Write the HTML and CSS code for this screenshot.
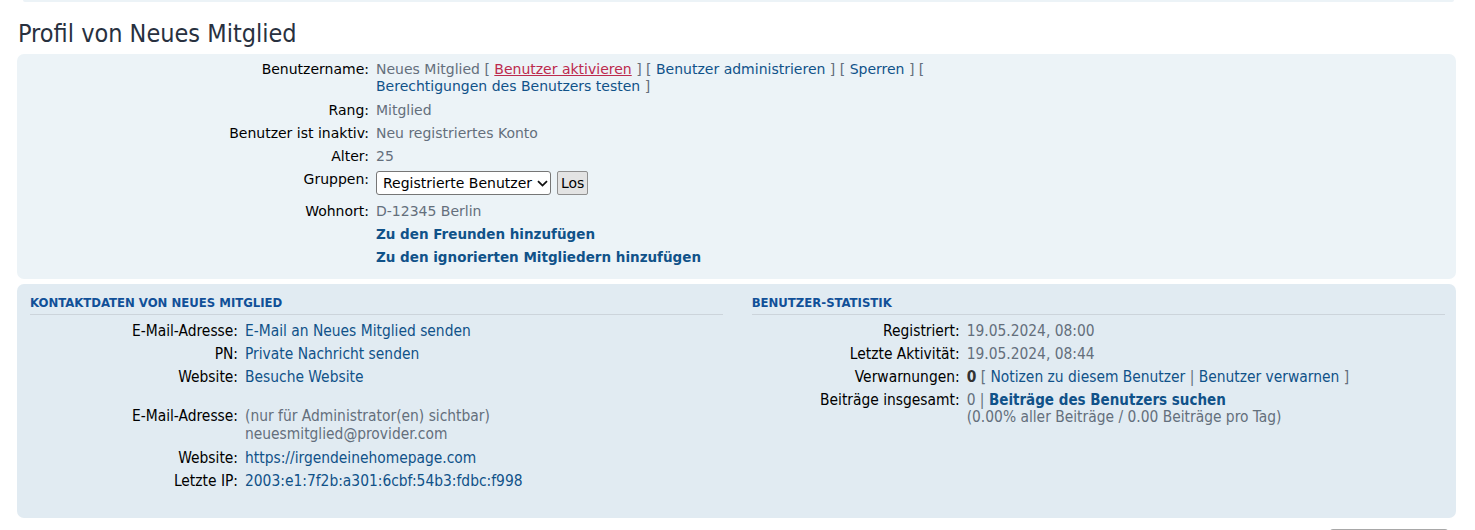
FILE: index.html
```html
<!DOCTYPE html>
<html lang="de">
<head>
<meta charset="utf-8">
<title>Profil von Neues Mitglied</title>
<link rel="stylesheet" href="styles.css">
</head>
<body>
<div class="page">
  <div class="prev-panel"></div>
  <h2 class="title">Profil von Neues Mitglied</h2>

  <div class="panel panel-top">
    <dl class="details top-details">
      <dt>Benutzername:</dt>
      <dd class="wide">Neues Mitglied [ <a href="#" class="red">Benutzer aktivieren</a> ] [ <a href="#">Benutzer administrieren</a> ] [ <a href="#">Sperren</a> ] [ <a href="#">Berechtigungen des Benutzers testen</a> ]</dd>
      <dt>Rang:</dt>
      <dd>Mitglied</dd>
      <dt>Benutzer ist inaktiv:</dt>
      <dd>Neu registriertes Konto</dd>
      <dt>Alter:</dt>
      <dd>25</dd>
      <dt>Gruppen:</dt>
      <dd class="groups">
        <span class="select-wrap">
          <select class="group-select"><option>Registrierte Benutzer</option></select>
          <svg class="chev" width="11" height="7" viewBox="0 0 11 7" aria-hidden="true"><path d="M1 1.2 L5.5 5.6 L10 1.2" fill="none" stroke="#111" stroke-width="1.8"/></svg>
        </span>
        <button class="btn" type="button">Los</button>
      </dd>
      <dt>Wohnort:</dt>
      <dd>D-12345 Berlin</dd>
      <dt></dt>
      <dd><a href="#" class="strong top-strong">Zu den Freunden hinzufügen</a></dd>
      <dt></dt>
      <dd><a href="#" class="strong top-strong">Zu den ignorierten Mitgliedern hinzufügen</a></dd>
    </dl>
  </div>

  <div class="panel panel-bottom">
    <div class="columns">
      <div class="column">
        <h3 class="col-head">Kontaktdaten von Neues Mitglied</h3>
        <dl class="details cond">
          <dt>E-Mail-Adresse:</dt>
          <dd><a href="#">E-Mail an Neues Mitglied senden</a></dd>
          <dt>PN:</dt>
          <dd><a href="#">Private Nachricht senden</a></dd>
          <dt>Website:</dt>
          <dd><a href="#">Besuche Website</a></dd>
        </dl>
        <dl class="details cond admin">
          <dt>E-Mail-Adresse:</dt>
          <dd>(nur für Administrator(en) sichtbar)<br>neuesmitglied@provider.com</dd>
          <dt>Website:</dt>
          <dd><a href="#">https://irgendeinehomepage.com</a></dd>
          <dt>Letzte IP:</dt>
          <dd><a href="#">2003:e1:7f2b:a301:6cbf:54b3:fdbc:f998</a></dd>
        </dl>
      </div>
      <div class="column">
        <h3 class="col-head">Benutzer-Statistik</h3>
        <dl class="details cond">
          <dt>Registriert:</dt>
          <dd>19.05.2024, 08:00</dd>
          <dt>Letzte Aktivität:</dt>
          <dd>19.05.2024, 08:44</dd>
          <dt>Verwarnungen:</dt>
          <dd><b class="num">0</b> [ <a href="#">Notizen zu diesem Benutzer</a> | <a href="#">Benutzer verwarnen</a> ]</dd>
          <dt>Beiträge insgesamt:</dt>
          <dd>0 | <a href="#" class="strong bottom-strong">Beiträge des Benutzers suchen</a><br>(0.00% aller Beiträge / 0.00 Beiträge pro Tag)</dd>
        </dl>
      </div>
    </div>
  </div>

  <div class="jump-edge"></div>
</div>
</body>
</html>
```

FILE: styles.css
```css
html, body {
  margin: 0;
  padding: 0;
  background: #ffffff;
}

body {
  font-family: "DejaVu Sans", Verdana, sans-serif;
  font-size: 14px;
  color: #333333;
  overflow: hidden;
}

.page {
  width: 1439px;
  padding-left: 17px;
}

.prev-panel {
  height: 2px;
  margin: 0 2px 0 6px;
  background: #ecf3f7;
  border-radius: 0 0 6px 6px;
}

.title {
  margin: 17px 0 5px 1px;
  font-family: "DejaVu Sans Condensed", "DejaVu Sans", sans-serif;
  font-weight: normal;
  font-size: 25px;
  line-height: 30px;
  color: #28313f;
}

.panel {
  border-radius: 7px;
}

.panel-top {
  background: #ecf3f7;
  padding: 7px 11px 13px 13px;
}

.panel-bottom {
  background: #e1ebf2;
  margin-top: 5px;
  padding: 12px 11px 28px 13px;
}

a {
  color: #105289;
  text-decoration: none;
}

a.red {
  color: #bc2a4d;
  text-decoration: underline;
}

a.strong {
  font-weight: bold;
}

a.top-strong {
  font-size: 13.5px;
}

a.bottom-strong {
  font-size: 15px;
}

.details {
  display: grid;
  margin: 0;
  row-gap: 6px;
  line-height: 17px;
}

.details dt {
  text-align: right;
  color: #000000;
}

.details dd {
  margin: 0;
  padding-left: 7px;
  color: #646f7c;
}

.top-details {
  width: 1132px;
  grid-template-columns: 339px 600px;
}

.top-details .wide {
  margin-bottom: 1px;
}

.groups {
  display: flex;
  align-items: center;
  gap: 6px;
  margin-bottom: 2px !important;
}

.select-wrap {
  position: relative;
  display: inline-flex;
}

.group-select {
  appearance: none;
  -webkit-appearance: none;
  height: 24px;
  width: 175px;
  font-family: "DejaVu Sans", Verdana, sans-serif;
  font-size: 14px;
  color: #000;
  background: #ffffff;
  border: 1px solid #767676;
  border-radius: 3px;
  padding: 0 14px 0 6px;
}

.chev {
  position: absolute;
  right: 3px;
  top: 9px;
  pointer-events: none;
}

.btn {
  height: 24px;
  font-family: "DejaVu Sans", Verdana, sans-serif;
  font-size: 14px;
  color: #000;
  background: #e3e3e3;
  border: 1px solid #8f8f8f;
  border-radius: 2px;
  padding: 0 3px;
}

.columns {
  display: flex;
  justify-content: space-between;
}

.column {
  width: 49%;
}

.col-head {
  margin: 0 0 8px 0;
  padding-bottom: 4px;
  font-family: "DejaVu Sans Condensed", "DejaVu Sans", sans-serif;
  font-size: 13px;
  line-height: 14px;
  font-weight: bold;
  text-transform: uppercase;
  color: #115098;
  border-bottom: 1px solid #ccd4db;
}

.cond {
  font-family: "DejaVu Sans Condensed", "DejaVu Sans", sans-serif;
  font-size: 15.4px;
  grid-template-columns: 30% 70%;
}

.admin {
  margin-top: 21px;
  line-height: 18px;
  row-gap: 5.5px;
}

.num {
  color: #333;
}

.jump-edge {
  width: 118px;
  height: 4px;
  margin: 11px 8px 0 auto;
  border-top: 1px solid #a8a8a8;
  border-radius: 3px 3px 0 0;
}
```
